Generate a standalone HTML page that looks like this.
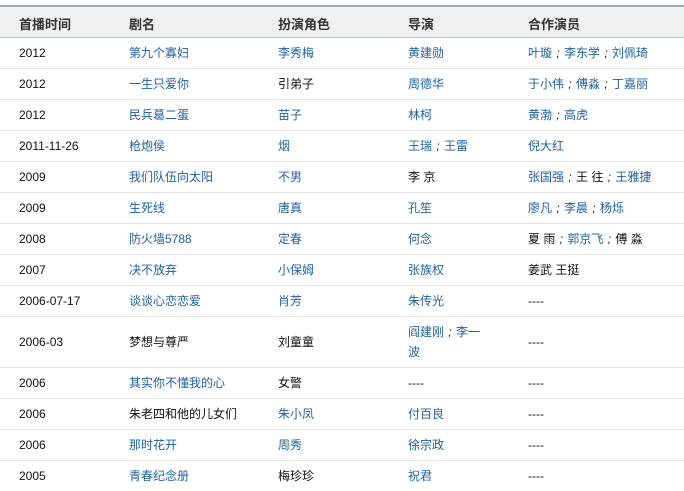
<!DOCTYPE html>
<html><head><meta charset="utf-8"><style>
body{margin:0;width:684px;height:491px;background:#fff;overflow:hidden;font-family:"Liberation Sans","Noto Sans CJK SC",sans-serif;font-size:12px;color:#111;position:relative}
.top{position:absolute;left:0;top:5px;width:684px;height:2px;background:#a8abae}
.hd{position:absolute;left:0;top:7px;width:684px;height:30px;background:#eef1f4;border-bottom:1px solid #bfc3c7}
.hd span{position:absolute;top:7px;font-weight:bold;font-size:13px;color:#333}
.r{position:absolute;left:0;width:684px;border-bottom:1px solid #e4e4e4}
.r>span{position:absolute;top:50%;transform:translateY(-50%);line-height:20px;white-space:nowrap}
.a{color:#1f62a0}
.s{color:#111;display:inline-block;width:12px;text-align:center}
.c1{left:19px}.c2{left:129px}.c3{left:278px}.c4{left:408px}.c5{left:528px}
</style></head><body>
<div class="top"></div>
<div class="hd"><span class="c1">首播时间</span><span class="c2">剧名</span><span class="c3">扮演角色</span><span class="c4">导演</span><span class="c5">合作演员</span></div>

<div class="r" style="top:38px;height:30px"><span class="c1">2012</span><span class="c2 a">第九个寡妇</span><span class="c3 a">李秀梅</span><span class="c4 a">黄建勋</span><span class="c5 a">叶璇<i class="s">;</i>李东学<i class="s">;</i>刘佩琦</span></div>
<div class="r" style="top:69px;height:30px"><span class="c1">2012</span><span class="c2 a">一生只爱你</span><span class="c3">引弟子</span><span class="c4 a">周德华</span><span class="c5 a">于小伟<i class="s">;</i>傅淼<i class="s">;</i>丁嘉丽</span></div>
<div class="r" style="top:100px;height:30px"><span class="c1">2012</span><span class="c2 a">民兵葛二蛋</span><span class="c3 a">苗子</span><span class="c4 a">林柯</span><span class="c5 a">黄渤<i class="s">;</i>高虎</span></div>
<div class="r" style="top:131px;height:30px"><span class="c1">2011-11-26</span><span class="c2 a">枪炮侯</span><span class="c3 a">烟</span><span class="c4 a">王瑞<i class="s">;</i>王雷</span><span class="c5 a">倪大红</span></div>
<div class="r" style="top:162px;height:30px"><span class="c1">2009</span><span class="c2 a">我们队伍向太阳</span><span class="c3 a">不男</span><span class="c4">李 京</span><span class="c5"><span class="a">张国强</span><i class="s">;</i>王 往<i class="s">;</i><span class="a">王雅捷</span></span></div>
<div class="r" style="top:193px;height:30px"><span class="c1">2009</span><span class="c2 a">生死线</span><span class="c3 a">唐真</span><span class="c4 a">孔笙</span><span class="c5 a">廖凡<i class="s">;</i>李晨<i class="s">;</i>杨烁</span></div>
<div class="r" style="top:224px;height:30px"><span class="c1">2008</span><span class="c2 a">防火墙5788</span><span class="c3 a">定春</span><span class="c4 a">何念</span><span class="c5">夏 雨<i class="s">;</i><span class="a">郭京飞</span><i class="s">;</i>傅 淼</span></div>
<div class="r" style="top:255px;height:30px"><span class="c1">2007</span><span class="c2 a">决不放弃</span><span class="c3 a">小保姆</span><span class="c4 a">张族权</span><span class="c5">姜武 王挺</span></div>
<div class="r" style="top:286px;height:30px"><span class="c1">2006-07-17</span><span class="c2 a">谈谈心恋恋爱</span><span class="c3 a">肖芳</span><span class="c4 a">朱传光</span><span class="c5">----</span></div>
<div class="r" style="top:317px;height:50px"><span class="c1">2006-03</span><span class="c2">梦想与尊严</span><span class="c3">刘童童</span><span class="c4 a">阎建刚<i class="s">;</i>李一<br>波</span><span class="c5">----</span></div>
<div class="r" style="top:368px;height:30px"><span class="c1">2006</span><span class="c2 a">其实你不懂我的心</span><span class="c3">女警</span><span class="c4">----</span><span class="c5">----</span></div>
<div class="r" style="top:399px;height:30px"><span class="c1">2006</span><span class="c2">朱老四和他的儿女们</span><span class="c3 a">朱小凤</span><span class="c4 a">付百良</span><span class="c5">----</span></div>
<div class="r" style="top:430px;height:30px"><span class="c1">2006</span><span class="c2 a">那时花开</span><span class="c3 a">周秀</span><span class="c4 a">徐宗政</span><span class="c5">----</span></div>
<div class="r" style="top:461px;height:30px;border:none"><span class="c1">2005</span><span class="c2 a">青春纪念册</span><span class="c3">梅珍珍</span><span class="c4 a">祝君</span><span class="c5">----</span></div>
</body></html>
